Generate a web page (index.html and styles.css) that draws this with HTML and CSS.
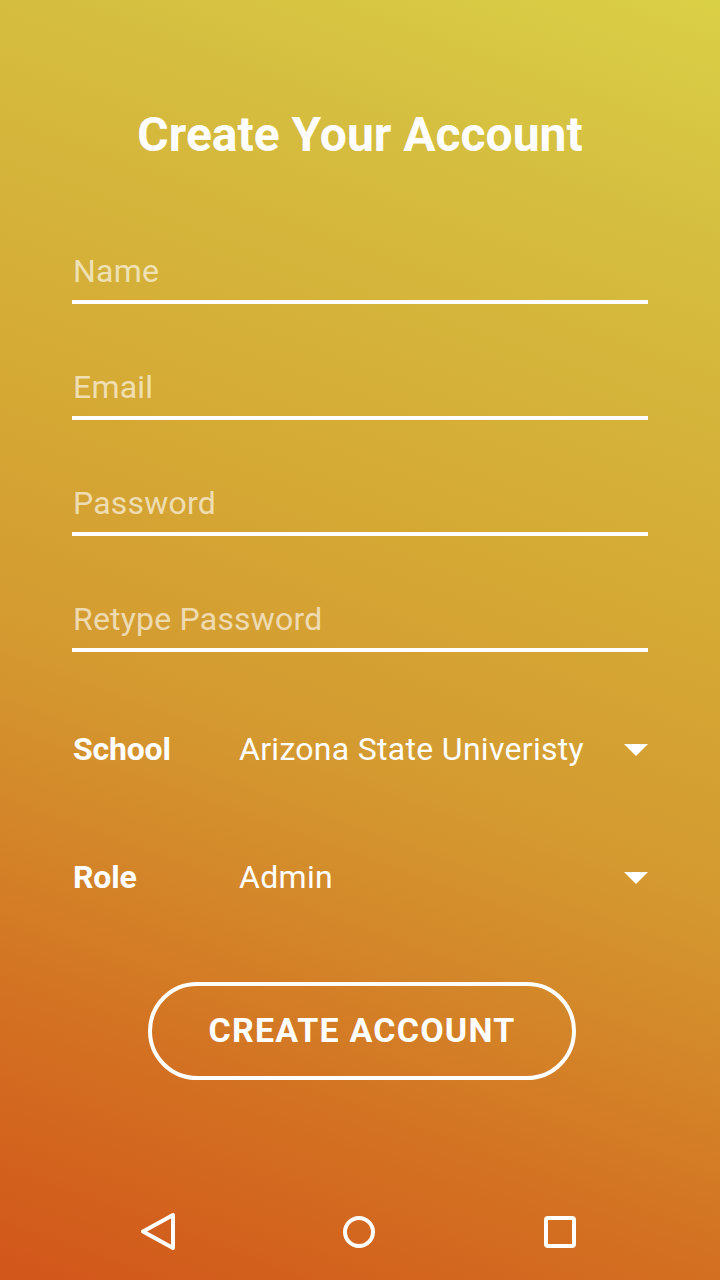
FILE: index.html
```html
<!DOCTYPE html>
<html lang="en">
<head>
<meta charset="utf-8">
<title>Create Your Account</title>
<link rel="stylesheet" href="styles.css">
</head>
<body>
<div class="screen">
  <main class="content">
    <h1 class="title">Create Your Account</h1>
    <form class="form">
      <div class="field"><span class="placeholder">Name</span></div>
      <div class="field"><span class="placeholder">Email</span></div>
      <div class="field"><span class="placeholder">Password</span></div>
      <div class="field"><span class="placeholder">Retype Password</span></div>

      <div class="selects">
        <div class="select-row">
          <span class="select-label">School</span>
          <span class="select-value">Arizona State Univeristy</span>
          <span class="caret"></span>
        </div>
        <div class="select-row">
          <span class="select-label">Role</span>
          <span class="select-value">Admin</span>
          <span class="caret"></span>
        </div>
      </div>

      <div class="button-wrap">
        <button type="button" class="create-btn">CREATE ACCOUNT</button>
      </div>
    </form>
  </main>
  <nav class="navbar">
    <span class="nav-btn">
      <svg width="48" height="48" viewBox="0 0 48 48"><path d="M9 23.5 L39 7 L39 40 Z" fill="none" stroke="#fff" stroke-width="4" stroke-linejoin="round"/></svg>
    </span>
    <span class="nav-btn">
      <svg width="48" height="48" viewBox="0 0 48 48"><circle cx="24" cy="24" r="14" fill="none" stroke="#fff" stroke-width="4"/></svg>
    </span>
    <span class="nav-btn">
      <svg width="48" height="48" viewBox="0 0 48 48"><rect x="10" y="10" width="28" height="28" rx="2" fill="none" stroke="#fff" stroke-width="4"/></svg>
    </span>
  </nav>
</div>
</body>
</html>
```

FILE: styles.css
```css
html, body {
  margin: 0;
  padding: 0;
}

body {
  width: 720px;
  height: 1280px;
  overflow: hidden;
  font-family: Roboto, "Noto Sans", "Liberation Sans", sans-serif;
  color: #fff;
}

.screen {
  width: 720px;
  height: 1280px;
  display: flex;
  flex-direction: column;
  background: linear-gradient(200deg,
    #dad046 0%,
    #d5bd3f 17%,
    #d5a834 42%,
    #d49a30 58%,
    #d36f21 83%,
    #d2561a 100%);
}

.content {
  flex: 1;
  display: flex;
  flex-direction: column;
  padding: 107px 72px 0;
}

.title {
  margin: 0;
  font-size: 48px;
  line-height: 56px;
  font-weight: 700;
  text-align: center;
}

.form {
  display: flex;
  flex-direction: column;
  margin-top: 88px;
}

.field {
  height: 40px;
  padding-bottom: 9px;
  border-bottom: 4px solid #fff;
  margin-bottom: 63px;
}

.field:nth-child(4) {
  margin-bottom: 0;
}

.placeholder {
  display: block;
  font-size: 32px;
  line-height: 40px;
  letter-spacing: 0.2px;
  color: rgba(255, 255, 255, 0.64);
  padding-left: 1px;
}

.selects {
  display: flex;
  flex-direction: column;
  gap: 88px;
  margin-top: 77px;
}

.select-row {
  display: flex;
  align-items: center;
  height: 40px;
}

.select-label {
  width: 167px;
  flex: none;
  font-size: 32px;
  line-height: 40px;
  font-weight: 700;
  letter-spacing: -0.2px;
  padding-left: 1px;
  box-sizing: border-box;
}

.select-value {
  flex: 1;
  font-size: 32px;
  line-height: 40px;
  letter-spacing: 0.3px;
}

.caret {
  width: 0;
  height: 0;
  border-left: 12px solid transparent;
  border-right: 12px solid transparent;
  border-top: 12px solid #fff;
  margin-top: 2px;
}

.button-wrap {
  display: flex;
  justify-content: center;
  margin-top: 85px;
}

.create-btn {
  width: 428px;
  height: 98px;
  margin-left: 4px;
  border: 4px solid #fff;
  border-radius: 49px;
  background: transparent;
  color: #fff;
  font-family: Roboto, "Noto Sans", "Liberation Sans", sans-serif;
  font-size: 34px;
  line-height: 40px;
  font-weight: 700;
  letter-spacing: 1.2px;
  padding: 0 0 3px;
  cursor: pointer;
}

.navbar {
  height: 96px;
  display: flex;
  justify-content: center;
  align-items: center;
  gap: 105px;
}

.nav-btn {
  width: 96px;
  height: 96px;
  display: flex;
  align-items: center;
  justify-content: center;
}

.nav-btn:first-child {
  margin-left: -2px;
}

.nav-btn svg {
  display: block;
}
```
